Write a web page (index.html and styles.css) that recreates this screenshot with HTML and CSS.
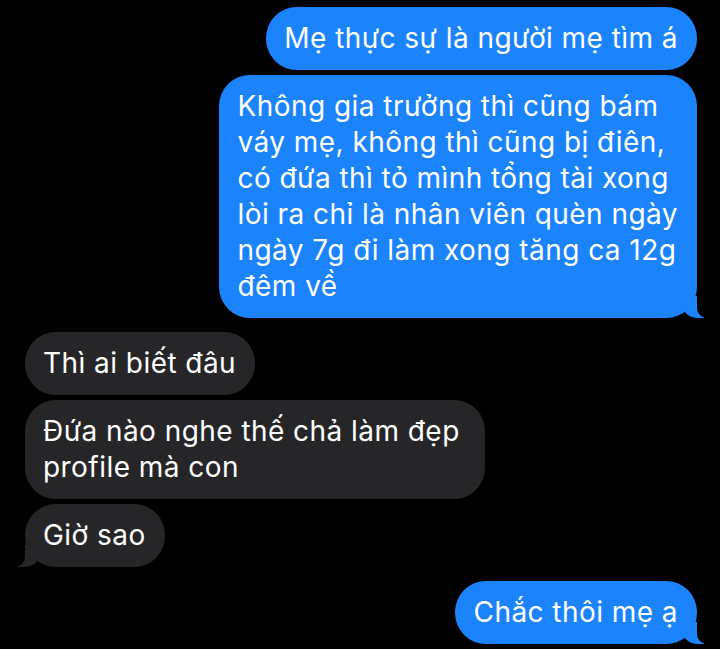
FILE: index.html
```html
<!DOCTYPE html>
<html lang="vi">
<head>
<meta charset="utf-8">
<title>Tin nhắn</title>
<link rel="stylesheet" href="styles.css">
</head>
<body>
<main class="thread">
  <div class="group group-sent">
    <div class="bubble sent">Mẹ thực sự là người mẹ tìm á</div>
    <div class="bubble sent tail">Không gia trưởng thì cũng bám<br>váy mẹ, không thì cũng bị điên,<br>có đứa thì tỏ mình tổng tài xong<br>lòi ra chỉ là nhân viên quèn ngày<br>ngày 7g đi làm xong tăng ca 12g<br>đêm về</div>
  </div>
  <div class="group group-received">
    <div class="bubble received">Thì ai biết đâu</div>
    <div class="bubble received wide">Đứa nào nghe thế chả làm đẹp<br>profile mà con</div>
    <div class="bubble received tail">Giờ sao</div>
  </div>
  <div class="group group-sent">
    <div class="bubble sent tail">Chắc thôi mẹ ạ</div>
  </div>
</main>
</body>
</html>
```

FILE: styles.css
```css
* { box-sizing: border-box; }
html, body {
  margin: 0;
  padding: 0;
  background: #000;
}
body {
  width: 720px;
  height: 649px;
  overflow: hidden;
  font-family: Inter, "Noto Sans", "Liberation Sans", sans-serif;
  color: #fff;
}
.thread {
  display: flex;
  flex-direction: column;
  gap: 14px;
  padding: 7px 23px 0 25px;
}
.group {
  display: flex;
  flex-direction: column;
  gap: 5px;
}
.group-sent { align-items: flex-end; }
.group-received { align-items: flex-start; }
.bubble {
  position: relative;
  font-size: 28px;
  letter-spacing: 0.45px;
  line-height: 36px;
  padding: 13px 19px 14px 18px;
  border-radius: 31px;
  white-space: nowrap;
}
.sent { background: #1b84fc; }
.received { background: #262629; }
.wide { padding-right: 25px; }

.sent.tail::before,
.sent.tail::after,
.received.tail::before,
.received.tail::after {
  content: "";
  position: absolute;
  bottom: 0;
  height: 22px;
}
.sent.tail::before {
  right: -7px;
  width: 22px;
  background: #1b84fc;
  border-bottom-left-radius: 16px 14px;
}
.sent.tail::after {
  right: -12px;
  width: 12px;
  background: #000;
  border-bottom-left-radius: 10px;
}
.received.tail::before {
  left: -7px;
  width: 22px;
  background: #262629;
  border-bottom-right-radius: 16px 14px;
}
.received.tail::after {
  left: -12px;
  width: 12px;
  background: #000;
  border-bottom-right-radius: 10px;
}
```
